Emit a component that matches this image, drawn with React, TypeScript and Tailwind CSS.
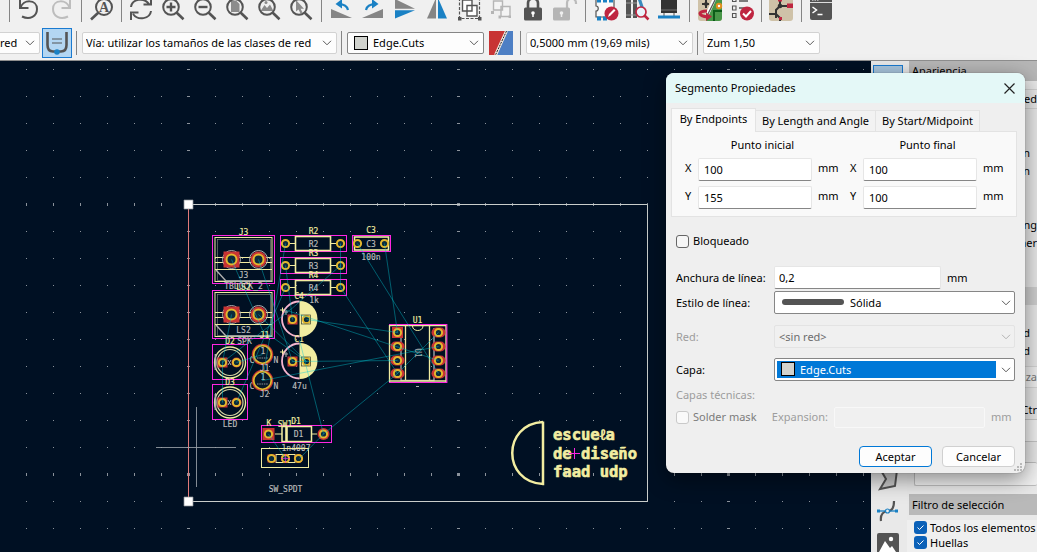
import React from "react";

const DARK = "#545454";
const BLUE = "#1a81c4";
const RED = "#bf2641";
const SILK = "#f2eda1";
const FAB = "#afafaf";
const COURT = "#ff26e2";
const PAD = "#c83434";
const GOLD = "#e3b72e";

function Chevron({ className = "" }: { className?: string }) {
  return (
    <svg viewBox="0 0 10 6" className={"pointer-events-none absolute top-1/2 h-[6px] w-[10px] -translate-y-1/2 " + className} fill="none" stroke="#5a5a5a">
      <path d="M1 .8 5 4.8 9 .8" />
    </svg>
  );
}

function ToolSelect({ label, value, className, swatch }: { label: string; value: string; className: string; swatch?: boolean }) {
  return (
    <div className={"relative h-[22px] shrink-0 rounded-[2px] border bg-[#fdfdfd] " + (swatch ? "border-[#868686] " : "border-[#d2d2d2] ") + className}>
      {swatch && <span className="pointer-events-none absolute top-[3px] left-[6px] size-[14px] border border-black bg-[#d0d2cd]" />}
      <select aria-label={label} className={"block h-full w-full appearance-none bg-transparent text-black outline-none " + (swatch ? "pl-[25px]" : "pl-[3px]")}>
        <option>{value}</option>
      </select>
      <Chevron className="right-[4px]" />
    </div>
  );
}

function Sep({ className = "" }: { className?: string }) {
  return (
    <span className={"flex w-2 shrink-0 justify-center self-stretch " + className}>
      <span className="w-px bg-[#858585]" />
    </span>
  );
}

function Tool({ label, children }: { label: string; children: React.ReactNode }) {
  return (
    <button aria-label={label} className="h-6 w-8 shrink-0">
      <svg viewBox="0 0 32 24" className="h-6 w-8" fill="none" stroke={DARK} strokeWidth="2">
        {children}
      </svg>
    </button>
  );
}

function Lens({ children }: { children: React.ReactNode }) {
  return (
    <>
      {children}
      <circle cx="14" cy="7" r="7.8" />
      <path d="M19.5 12.5 26.5 19.3" strokeWidth="2.6" />
    </>
  );
}

function TopTools() {
  return (
    <div className="flex h-6 shrink-0 overflow-hidden pl-[5px]">
      <Sep className="pb-[2px]" />
      <Tool label="Deshacer">
        <path d="M7 0V8H15.500M7.500 8C10-1 24-1 24 9C24 16 17 20.500 9 16.500" />
      </Tool>
      <Tool label="Rehacer">
        <path d="M25 0V8H16.500M24.500 8C22-1 8-1 8 9C8 16 15 20.500 23 16.500" stroke="#bdbdbd" />
      </Tool>
      <Sep className="pb-[2px]" />
      <Tool label="Buscar">
        <circle cx="19" cy="7" r="8" />
        <path d="M13.500 12.500 6 19.500" strokeWidth="2.600" />
        <text x="19" y="11.500" textAnchor="middle" fontFamily="Liberation Serif, serif" fontWeight="700" fontSize="14" fill={DARK} stroke="none">A</text>
      </Tool>
      <Sep className="pb-[2px]" />
      <Tool label="Refrescar">
        <path d="M6 7C7-1 19-3 24 4M26-3V4.500H18.500M26 11C25 19 13 21 8 14M6 20V12.500H13.500" />
      </Tool>
      <Tool label="Acercar"><Lens><path d="M9.500 7H18.500M14 2.500V11.500" strokeWidth="2.400" /></Lens></Tool>
      <Tool label="Alejar"><Lens><path d="M9.500 7H18.500" strokeWidth="2.400" /></Lens></Tool>
      <Tool label="Ajustar a la página"><Lens><path d="M10 1H15.500L18.500 4V12H10Z" fill="#8c8c8c" stroke="none" /></Lens></Tool>
      <Tool label="Ajustar a objetos"><Lens><path d="M7.500 11 11.500 5 14 8 17 4.500 20.500 11Z" fill="#8c8c8c" stroke="none" /><circle cx="13" cy="2.500" r="1.500" fill="#8c8c8c" stroke="none" /></Lens></Tool>
      <Tool label="Ajustar a la selección"><Lens><path d="M11 0V11.500L13.500 9.500 15.500 13.500 17.500 12.500 15.600 8.700H19Z" fill="#8c8c8c" stroke="none" /></Lens></Tool>
      <Sep className="pb-[2px]" />
      <Tool label="Girar a la izquierda">
        <path d="M6 9V18H27Z" fill="#858585" stroke="none" />
        <path d="M23 10C22 6 18 4 13 4.200" stroke={BLUE} strokeWidth="2.200" />
        <path d="M10.500 4 17-1V8.500Z" fill={BLUE} stroke="none" />
      </Tool>
      <Tool label="Girar a la derecha">
        <path d="M26 9V18H5Z" fill="#858585" stroke="none" />
        <path d="M9 10C10 6 14 4 19 4.200" stroke={BLUE} strokeWidth="2.200" />
        <path d="M21.500 4 15-1V8.500Z" fill={BLUE} stroke="none" />
      </Tool>
      <Tool label="Voltear vertical">
        <path d="M6-1V8.800H26Z" fill="#858585" stroke="none" />
        <path d="M6 10.200V18.500L26 10.200Z" fill={BLUE} stroke="none" />
      </Tool>
      <Tool label="Voltear horizontal">
        <path d="M15-2V18.500H6Z" fill="#858585" stroke="none" />
        <path d="M17-2V18.500H26Z" fill={BLUE} stroke="none" />
      </Tool>
      <Tool label="Agrupar">
        <path d="M6.500-2V18.500H26.500V-2" strokeWidth="1.200" strokeDasharray="3 1.500" />
        <path d="M5 17H8.500V20.500H5ZM25 17H28.500V20.500H25Z" fill={DARK} stroke="none" />
        <path d="M9.500 0H19V11H9.500ZM14 5.500H24V16H14Z" fill="#fff" strokeWidth="1.400" />
      </Tool>
      <Tool label="Desagrupar">
        <g stroke="#b5b5b5" strokeWidth="1.400">
          <path d="M8.500 1H17.500V10H8.500ZM16 6.500H25V16.500H16Z" fill="#f4f4f4" />
          <path d="M6 11H9V14H6ZM13.500 15.500H16V18.500H13.500ZM23.500 15.500H26V18H23.500Z" fill="#b5b5b5" stroke="none" />
        </g>
      </Tool>
      <Tool label="Bloquear">
        <path d="M11 9V3C11-3 21-3 21 3V9" strokeWidth="2.600" />
        <rect x="7" y="7.500" width="18" height="13" rx="1.500" fill={DARK} stroke="none" />
        <circle cx="16" cy="13" r="1.800" fill="#fff" stroke="none" /><path d="M16 13V17" stroke="#fff" strokeWidth="1.500" />
      </Tool>
      <Tool label="Desbloquear">
        <path d="M18 9V3C18-3 27-3 27 3V4" stroke="#bbb" strokeWidth="2.200" />
        <rect x="4" y="7.500" width="17" height="13" rx="1.500" fill="#b5b5b5" stroke="none" />
        <circle cx="12.500" cy="13" r="1.800" fill="#eee" stroke="none" /><path d="M12.500 13V17" stroke="#eee" strokeWidth="1.500" />
      </Tool>
      <Sep className="pb-[2px]" />
      <Tool label="Editor de huellas">
        <path d="M7 0V6C10 6 10 11 7 11V17H25V0" strokeWidth="1.200" fill="#fafafa" />
        <path d="M8-1H12V2.500H8ZM14-1H18V2.500H14ZM20-1H24V2.500H20ZM8 16.500H12V20.500H8ZM14 16.500H18V20.500H14Z" fill={BLUE} stroke="none" />
        <circle cx="22.500" cy="13.500" r="7" fill={RED} stroke="none" />
        <path d="M19 17 20 14 25 9 26.500 10.500 21.500 15.500Z" fill="#fff" stroke="none" />
      </Tool>
      <Tool label="Explorador de huellas">
        <path d="M5 0H10V18H5ZM12 0H16V18H12Z" fill={DARK} stroke="none" />
        <path d="M5 3H16M5 15H16" stroke="#999" strokeWidth="1" />
        <path d="M17 0 20-1 25 14 23 18Z" fill="#398bbd" stroke="none" />
        <circle cx="20" cy="12" r="5" stroke={RED} fill="#e9f3fb" strokeWidth="1.700" />
        <path d="M23.500 15.500 27.500 19.500" stroke={RED} strokeWidth="2.500" />
      </Tool>
      <Tool label="Visor 3D">
        <path d="M8-1H24V13H8Z" fill="#333" stroke="none" />
        <path d="M8 10H24" stroke="#777" strokeWidth="1" />
        <path d="M11 13V16M21 13V16" strokeWidth="1.500" stroke="#888" />
        <path d="M5 15.500H27V18.500H5Z" fill={BLUE} stroke="none" />
      </Tool>
      <Sep className="pb-[2px]" />
      <Tool label="Actualizar placa">
        <path d="M5-3H29V18Q29 21 26 21H8Q5 21 5 18Z" fill="#cfc2a8" stroke="none" />
        <path d="M22-3H29V18Q29 21 26 21H13Z" fill="#489648" stroke="none" />
        <path d="M9 4H16M13 0V8" stroke="#333" /><circle cx="13" cy="4" r="2" fill="#333" stroke="none" />
        <path d="M22-2 14 15" stroke="#fff" strokeWidth="3.500" /><path d="M23-2 15 14" stroke="#555" strokeWidth="1.200" />
        <circle cx="26" cy="6" r="2.200" stroke="#e0901d" fill="#fff" /><path d="M21 21V11H29" stroke="#0c5b18" />
        <path d="M14 11C4 11 5 16 15 17" stroke={RED} strokeWidth="3" /><path d="M13 12.500 19 16.500 13 21Z" fill={RED} stroke="none" />
      </Tool>
      <Tool label="Comprobar reglas">
        <path d="M7.500-2.500H11V1.500H7.500ZM7.500 6H11V10H7.500ZM7.500 13.500H11V17.500H7.500Z" strokeWidth="1.100" />
        <path d="M14 1H23M14 8H19" strokeWidth="1.300" />
        <circle cx="22" cy="13.500" r="7" fill={RED} stroke="none" />
        <path d="M18 13.500 21 16.500 26 11" stroke="#fff" />
      </Tool>
      <Sep className="pb-[2px]" />
      <Tool label="Editor de esquemas">
        <path d="M4-3H28V18Q28 21 25 21H7Q4 21 4 18Z" fill="#cfc2a8" stroke="none" />
        <path d="M15 0V6H22M15 6 11 10V18M4 14H11L15 18V21" stroke="#333" />
        <path d="M22 3.500H28V8H22ZM13-1H17V1.500H13ZM14 17H17V20H14Z" fill={RED} stroke="none" />
        <circle cx="15" cy="6" r="2.300" fill="#333" stroke="none" />
      </Tool>
      <Sep className="pb-[2px]" />
      <Tool label="Consola">
        <rect x="5" y="-4" width="22" height="24" rx="2" fill={DARK} stroke="none" />
        <path d="M5 2.500H27" stroke="#ddd" strokeWidth="1" />
        <path d="M7-.500H14" stroke="#fff" strokeDasharray="1.500 1" />
        <path d="M7.500 7 11.500 10 7.500 13M12.500 14.500H17.500" stroke="#fff" strokeWidth="1.500" />
      </Tool>
    </div>
  );
}

function OptionBar() {
  return (
    <div className="flex h-9 shrink-0 items-center overflow-hidden pt-[2px]">
      <ToolSelect label="Pista" value="red" className="-ml-1 w-[44px]" />
      <button aria-label="Ancho automático" className="ml-[2px] flex h-[30px] w-[30px] shrink-0 items-center justify-center border border-[#1a7ad0] bg-[#b3d6f2]">
        <svg viewBox="0 0 26 26" className="size-[26px]" fill="none" stroke={DARK} strokeWidth="2.600">
          <path d="M3.500 2V15C3.500 19 5 21.500 9 21.500H17C21 21.500 22.500 19 22.500 15V2" />
          <path d="M8 9H18M8 13H18" strokeWidth="1.200" />
          <circle cx="13" cy="22" r="2.800" fill={BLUE} stroke="none" />
        </svg>
      </button>
      <Sep className="py-[5px]" />
      <ToolSelect label="Vía" value="Vía: utilizar los tamaños de las clases de red" className="ml-[2px] w-[255px]" />
      <Sep className="py-[5px]" />
      <ToolSelect label="Capa activa" value="Edge.Cuts" swatch className="ml-[2px] w-[137px]" />
      <button aria-label="Par de capas" className="ml-[5px] size-6 shrink-0">
        <svg viewBox="0 0 24 24" className="size-6">
          <path d="M0 0H17L6 24H0Z" fill="#c83434" />
          <path d="M18 0H24V24H8Z" fill="#4d7fc4" />
          <path d="M17.500 0 6.500 24" stroke="#f3e9e0" strokeWidth="3" />
          <path d="M17.500 0 6.500 24" stroke="#222" strokeDasharray="2 1" />
        </svg>
      </button>
      <Sep className="ml-[3px] py-[5px]" />
      <ToolSelect label="Cuadrícula" value="0,5000 mm (19,69 mils)" className="ml-[2px] w-[167px]" />
      <Sep className="py-[5px]" />
      <ToolSelect label="Zum" value="Zum 1,50" className="ml-[2px] w-[117px]" />
    </div>
  );
}

function T({ x, y, c = "#bcbcbc", children }: { x: number; y: number; c?: string; children: string }) {
  return (
    <text x={x} y={y} fill={c} stroke={c} strokeWidth=".15" textAnchor="middle">
      {children}
    </text>
  );
}

function Pad({ x, y, r = 6, kind = "round" }: { x: number; y: number; r?: number; kind?: "round" | "square" | "bare" | "oval" }) {
  const g = r > 7 ? 5 : 3.6;
  return (
    <g>
      {kind === "square" && <rect x={x - r} y={y - r} width={r * 2} height={r * 2} fill={PAD} />}
      {kind === "round" && <circle cx={x} cy={y} r={r} fill={PAD} />}
      {kind === "oval" && <rect x={x - 7} y={y - 5} width="14" height="10" rx="5" fill={PAD} />}
      <circle cx={x} cy={y} r={g} fill="#0b2b3c" stroke={GOLD} strokeWidth="2" />
    </g>
  );
}

function Terminal({ dy, name }: { dy: number; name: string }) {
  return (
    <g transform={`translate(0 ${dy})`}>
      <rect x="212.500" y="235.500" width="62" height="48" stroke={COURT} />
      <rect x="215" y="237.500" width="57" height="44" stroke={SILK} />
      <rect x="217.500" y="239.500" width="53" height="41" stroke="#8d8f80" strokeWidth=".6" />
      <path d="M215 257.500H272M215 262.500H272M215 269.500H272" stroke={SILK} />
      <path d="M216 270 226 281H272" stroke={FAB} strokeWidth="1.300" />
      <circle cx="231.500" cy="259.500" r="9" stroke={FAB} />
      <circle cx="258.500" cy="259.500" r="9" stroke={FAB} />
      <Pad x={231.5} y={259.5} r={8} kind="square" />
      <Pad x={258.5} y={259.5} r={8} />
      <T x={243.5} y={277.5}>{name}</T>
    </g>
  );
}

function Resistor({ dy, name }: { dy: number; name: string }) {
  return (
    <g transform={`translate(0 ${dy})`}>
      <rect x="280.500" y="235.500" width="66" height="16" stroke={COURT} />
      <path d="M289 243.500H295M331 243.500H337" stroke={SILK} />
      <rect x="295.500" y="236.500" width="35" height="14" stroke={SILK} strokeWidth="1.600" />
      <Pad x={285.5} y={243.5} kind="bare" />
      <Pad x={340.5} y={243.5} kind="bare" />
      <T x={313.5} y={247}>{name}</T>
      <T x={313.5} y={234} c={SILK}>{name}</T>
    </g>
  );
}

function Capacitor({ dy }: { dy: number }) {
  return (
    <g transform={`translate(0 ${dy})`}>
      <path d="M299.500 301.500A17.500 17.500 0 0 0 299.500 336.500" stroke="#f6b5cf" strokeWidth="1.800" />
      <path d="M299.500 301A18 18 0 0 1 299.500 337Z" fill={SILK} />
      <path d="M280 310H285M282.500 307.500V312.500" stroke={SILK} />
      <path d="M284 312H288M286 310V315" stroke={FAB} />
      <Pad x={292.5} y={319.5} r={5} kind="square" />
      <Pad x={306.5} y={319.5} kind="bare" />
      <rect x="301.500" y="315" width="9" height="9" stroke="#39402f" strokeWidth=".7" />
    </g>
  );
}

function Led({ dy }: { dy: number }) {
  return (
    <g transform={`translate(0 ${dy})`}>
      <rect x="212.500" y="344.500" width="35" height="35" stroke={COURT} />
      <circle cx="230" cy="362.500" r="15.500" stroke={SILK} strokeWidth="1.300" />
      <circle cx="230" cy="362.500" r="13" stroke="#d5d2a0" strokeWidth="1.200" />
      <path d="M215.500 354V370" stroke={FAB} strokeWidth="1.800" />
      <Pad x={222.5} y={362.5} r={5} kind="square" />
      <Pad x={236.5} y={362.5} r={5} />
      <path d="M228 360 231 365M231 360 228 365" stroke={FAB} />
    </g>
  );
}

const ratsnest =
  "M357.5 243.5 438.5 373.5M384.5 243.5 397.5 332.5M340.5 287.5 397.5 373.5M340.5 243.5V287.5M438.5 332.5 397.5 373.5 323.5 434M306.5 319.5 397.5 332.5M285.5 310 438.5 360.5M292.5 361.500 397.5 360.5M262.5 380.5 438.5 346.5M299.5 340 323.5 434M231.5 259.5 262.5 330 306.500 361.500M258.500 259.500 292.500 361.500M285.500 243.500 262.500 380.500M285.500 265.500 292.500 319.500M285.500 287.500 236.500 402.500M340.500 265.500 292.500 308 222.500 362.500M231.500 314.500 222.500 362.500V402.500M258.500 314.500 306.500 361.500M236.500 362.500 262.500 354.500M268.500 434 285.500 458.500M299.500 458.500 323.500 434";

const cols = Array.from({ length: 33 }, (_, i) => i - 6);
const rows = Array.from({ length: 19 }, (_, i) => i - 5);

function Board() {
  return (
    <svg viewBox="0 61 871 491" className="h-[491px] w-[871px] shrink-0" fill="none" fontFamily="DejaVu Sans Mono, monospace" fontSize="8" role="img" aria-label="Placa">
      <g fill="#8b929b">
        {rows.map((r) =>
          cols.map((c) => (
            <rect
              key={r + "_" + c}
              x={188 + c * 27 - (c % 10 === 0 ? 1 : 0)}
              y={204 + r * 27 - (r % 10 === 0 ? 1 : 0)}
              width={c % 10 === 0 ? 3 : 1}
              height={r % 10 === 0 ? 3 : 1}
            />
          ))
        )}
      </g>
      <path d="M188.500 204.500H647.500V501.500H188.500" stroke="#c9cdcb" />
      <path d="M188.500 204V501" stroke="#e07a7a" />

      <Terminal dy={0} name="J3" />
      <Terminal dy={55} name="LS2" />
      <T x={243.5} y={235} c={SILK}>J3</T>
      <T x={243.5} y={289}>TBLOCK_2</T>
      <T x={243.5} y={290} c={SILK}>LS2</T>
      <Resistor dy={0} name="R2" />
      <Resistor dy={22} name="R3" />
      <Resistor dy={44} name="R4" />
      <T x={314} y={303}>1k</T>

      <rect x="352.500" y="235.500" width="38" height="16" stroke={COURT} />
      <rect x="354.500" y="237" width="34" height="13" stroke={SILK} strokeWidth="1.600" />
      <Pad x={357.5} y={243.5} kind="bare" />
      <Pad x={384.5} y={243.5} kind="bare" />
      <T x={371} y={233} c={SILK}>C3</T>
      <T x={371} y={247}>C3</T>
      <T x={371} y={260}>100n</T>

      <Capacitor dy={0} />
      <Capacitor dy={42} />
      <T x={299} y={299} c={SILK}>C4</T>
      <T x={299} y={342} c={SILK}>C1</T>
      <T x={299.5} y={388.5}>47u</T>

      <Led dy={0} />
      <Led dy={40} />
      <T x={230} y={344} c={SILK}>D2</T>
      <T x={244.5} y={344}>SPK</T>
      <T x={230} y={385} c={SILK}>D3</T>
      <T x={230} y={427}>LED</T>

      <T x={252} y={363}>C</T>
      <T x={276} y={363}>N</T>
      <T x={252} y={389}>C</T>
      <T x={276} y={389}>N</T>
      {[354.5, 380.5].map((y) => (
        <g key={y}>
          <circle cx="262.500" cy={y} r="10" stroke={PAD} strokeWidth="1.500" fill="#061829" />
          <circle cx="262.500" cy={y} r="8.800" stroke={GOLD} strokeWidth="1.800" />
          <T x={263} y={y - 1}>1</T>
          <path d={`M257 ${y + 3.5}H268`} stroke="#8b9199" strokeWidth="1" strokeDasharray="1.500 .8" />
        </g>
      ))}
      <T x={264.5} y={338} c={SILK}>J1</T>
      <T x={264.5} y={371}>J1</T>
      <T x={264.5} y={397}>J2</T>

      <rect x="261.500" y="425.500" width="70" height="17" stroke={COURT} />
      <path d="M275 434H282M311 434H317" stroke={SILK} />
      <rect x="282" y="426.500" width="29.500" height="15" stroke={SILK} strokeWidth="1.500" />
      <path d="M286.500 426V442" stroke={SILK} strokeWidth="2.600" />
      <Pad x={268.5} y={434} kind="square" />
      <Pad x={323.5} y={434} />
      <T x={269} y={426} c={SILK}>K</T>
      <T x={296} y={424} c={SILK}>D1</T>
      <T x={298.5} y={437}>D1</T>
      <T x={285} y={427} c={SILK}>SW1</T>
      <T x={296} y={451}>1n4007</T>
      <rect x="261.500" y="448.500" width="47" height="19" stroke={SILK} />
      <rect x="276" y="454.500" width="19" height="8" stroke={SILK} />
      <Pad x={271.5} y={458.5} r={4} kind="square" />
      <Pad x={285.5} y={458.5} r={4.5} />
      <Pad x={298.5} y={458.5} r={4.5} />
      <path d="M281 458.500H290M285.500 454V463" stroke={COURT} strokeOpacity=".6" />
      <T x={285.500} y={492}>SW_SPDT</T>

      <path d="M401 328V380.500H434V328" stroke={FAB} strokeWidth="1.300" />
      <path d="M389.500 325V382M446 325V382M405.500 326V380M429.500 326V380M389 325.500H446M389 381H446" stroke={SILK} strokeWidth="1.300" />
      <path d="M412.500 326C412.500 332 423 332 423 326" stroke={SILK} />
      <path d="M389 324.500H447M389 382.500H447M446.900 324V383" stroke={COURT} />
      {[332.5, 346.5, 360.5, 373.5].map((y, i) => (
        <g key={y}>
          <Pad x={397.5} y={y} kind={i === 0 ? "square" : "oval"} r={5.5} />
          <Pad x={438.5} y={y} kind="oval" />
        </g>
      ))}
      <T x={417.500} y={323} c={SILK}>U1</T>
      <text x="0" y="0" transform="translate(414.5 353) rotate(90)" fill={FAB} textAnchor="middle">U1</text>
      <path d="M416 386.500H419" stroke={FAB} />

      <path d={ratsnest} stroke="#00c8d4" strokeOpacity=".42" />
      <path d="M156 447.500H236M196.500 407V487" stroke="#9aa1a8" strokeOpacity=".85" />
      <path d="M184 200H193V209H184ZM184 497H193V506H184Z" fill="#fff" stroke="#8e9298" strokeWidth=".7" />

      <path d="M543 421.500V484C502 482 502 424 543 422" stroke={SILK} strokeWidth="2.500" />
      <g fill={SILK} stroke={SILK} strokeWidth=".6" fontFamily="DejaVu Sans Mono, monospace" fontWeight="700" fontSize="15.500">
        <text x="553" y="440">escueℓa</text>
        <text x="553" y="458.500">de diseño</text>
        <text x="553" y="477">faad udp</text>
      </g>
      <path d="M569 453.500H580M574.500 448V459" stroke={COURT} />
    </svg>
  );
}

function SideTools() {
  return (
    <div className="flex w-9 shrink-0 flex-col items-center justify-between bg-[#e9e9e9] pr-[2px]">
      <button aria-label="Seleccionar" className="mt-1 h-[30px] w-[30px] border border-[#1a7ad0] bg-[#a9c6de]" />
      <div className="flex flex-col items-center">
        <button aria-label="Zona" className="h-8 w-8">
          <svg viewBox="0 0 32 32" className="size-8" fill="#c9c9c9" stroke={DARK} strokeWidth="2"><path d="M7 2 25 5 23 21 8 24 14 14Z" /></svg>
        </button>
        <button aria-label="Curva" className="h-8 w-8">
          <svg viewBox="0 0 32 32" className="size-8" fill="none" stroke={DARK} strokeWidth="2.200"><path d="M9 24C8 17 12 14 16 14C20 14 22 11 22 4" /><path d="M6 14H26" stroke={BLUE} strokeWidth="1.300" /><path d="M5 12.500H8V15.500H5ZM23 12.500H26V15.500H23Z" fill={BLUE} stroke="none" /><circle cx="15.500" cy="14" r="2" fill="#eee" stroke={BLUE} strokeWidth="1.200" /></svg>
        </button>
        <button aria-label="Imagen" className="h-[23px] w-8 overflow-hidden">
          <svg viewBox="0 0 32 23" className="h-[23px] w-8"><path d="M7 4H25Q27 4 27 6V23H5V6Q5 4 7 4Z" fill={DARK} /><circle cx="19" cy="10" r="2.200" fill="#fff" /><path d="M7 23 13 12 18 19 20 17 24 23Z" fill="#fff" /></svg>
        </button>
      </div>
    </div>
  );
}

function Frag({ children, className = "" }: { children?: string; className?: string }) {
  return <div className={"flex shrink-0 items-center justify-end overflow-hidden whitespace-nowrap " + className}>{children}</div>;
}

function FilterBox({ label }: { label: string }) {
  return (
    <label className="flex h-[15px] items-center gap-[3px] whitespace-nowrap">
      <span className="relative size-[13px] shrink-0">
        <input type="checkbox" defaultChecked className="block size-[13px] appearance-none rounded-[3px] bg-[#0b61b8]" />
        <svg viewBox="0 0 13 13" className="pointer-events-none absolute inset-0 size-[13px]" fill="none" stroke="#fff"><path d="M3.500 6.500 5.500 8.500 9.500 4.500" /></svg>
      </span>
      {label}
    </label>
  );
}

function SidePanel() {
  return (
    <aside className="flex min-w-0 flex-1 flex-col overflow-hidden bg-[#e8e8e8]">
      <div className="ml-[2px] flex h-[20px] shrink-0 items-center bg-[#b7b7b7] pl-[3px]">Apariencia</div>
      <Frag className="mt-[8px] h-[20px] border-y border-[#d0d0d0]">ed</Frag>
      <Frag className="mt-[35px] h-[18px] pr-[7px]">n</Frag>
      <Frag className="h-[18px] pr-[7px]">n</Frag>
      <Frag className="mt-[36px] h-[18px]">ng</Frag>
      <Frag className="h-[18px]">ner</Frag>
      <Frag className="mt-[35px] h-[18px] bg-[#cfcfcf]" />
      <Frag className="mt-[19px] h-[18px] pr-[7px]">d</Frag>
      <Frag className="h-[18px] pr-[7px]">d</Frag>
      <Frag className="mt-[6px] h-[22px] border-y border-[#d5d5d5] bg-[#efefef] text-[#777]">liza</Frag>
      <Frag className="mt-[12px] h-[20px] border-b border-[#c5c5c5]">Ctr</Frag>
      <Frag className="h-[22px] border-b border-[#c5c5c5] bg-[#f0f0f0]" />
      <Frag className="mt-[20px] ml-[7px] h-[24px] rounded-[2px] border border-r-0 border-[#bdbdbd] bg-[#f1f1f1]" />
      <div className="mt-[8px] ml-[2px] flex h-[21px] shrink-0 items-center bg-[#b9b9b9] pl-[3px]">Filtro de selección</div>
      <div className="mt-[5px] flex flex-1 flex-col bg-[#efefef] pl-[7px]">
        <FilterBox label="Todos los elementos" />
        <FilterBox label="Huellas" />
      </div>
    </aside>
  );
}

function NumberField({ id, label, value }: { id: string; label: string; value: string }) {
  return (
    <div className="flex items-center">
      <label htmlFor={id} className="w-[13px] pb-1">{label}</label>
      <input id={id} defaultValue={value} className="h-[23px] w-[114px] rounded-[2px] border border-[#e6e6e6] border-b-[#868686] bg-white pl-[5px] outline-none" />
      <span className="ml-[6px] pb-1">mm</span>
    </div>
  );
}

function DialogSelect({ id, value, kind }: { id: string; value: string; kind: "line" | "off" | "layer" }) {
  const frame = kind === "off" ? "border-[#e3e3e3] bg-[#f0f0f0]" : "border-[#868686] bg-white";
  return (
    <div className={"relative h-[23px] flex-1 rounded-[2px] border p-[2px] " + frame}>
      <div className={"relative mr-[16px] h-full " + (kind === "layer" ? "bg-[#0078d7]" : "")}>
        {kind === "line" && <span className="pointer-events-none absolute top-[5px] left-[5px] h-[6px] w-[62px] rounded-full bg-[#545454]" />}
        {kind === "layer" && <span className="pointer-events-none absolute top-[1px] left-[4px] size-[14px] border border-black bg-[#d0d2cd]" />}
        <select
          id={id}
          disabled={kind === "off"}
          className={
            "block h-full w-full appearance-none bg-transparent opacity-100 outline-none " +
            (kind === "line" ? "pl-[73px] text-black" : kind === "off" ? "pl-[2px] text-[#6d6d6d]" : "pl-[23px] text-white")
          }
        >
          <option>{value}</option>
        </select>
      </div>
      <Chevron className={"right-[3px] " + (kind === "off" ? "opacity-40" : "")} />
    </div>
  );
}

function PropertiesDialog() {
  const tab = "border border-b-0 border-[#e3e3e3] whitespace-nowrap ";
  return (
    <section role="dialog" aria-labelledby="dlg-title" className="absolute top-[73px] right-[12px] w-[359px] overflow-hidden rounded-lg bg-[#efefef] shadow-[0_6px_22px_rgba(0,0,0,0.45),0_0_1px_rgba(0,0,0,0.6)]">
      <header className="flex h-[30px] items-center justify-between bg-[#e4f8f7] pr-[10px] pl-[9px]">
        <h1 id="dlg-title">Segmento Propiedades</h1>
        <button aria-label="Cerrar">
          <svg viewBox="0 0 11 11" className="size-[11px]" fill="none" stroke="#222" strokeWidth="1.200"><path d="M.5.500 10.500 10.500M10.500.500.500 10.500" /></svg>
        </button>
      </header>
      <div className="pt-[5px] pr-[8px] pl-[5px]">
        <div role="tablist" className="flex items-end">
          <button role="tab" aria-selected="true" className={tab + "relative z-10 -mb-px h-[24px] w-[85px] bg-[#f9f9f9] pb-[3px]"}>By Endpoints</button>
          <button role="tab" aria-selected="false" className={tab + "h-[21px] w-[120px] border-l-0 bg-[#f2f2f2]"}>By Length and Angle</button>
          <button role="tab" aria-selected="false" className={tab + "h-[21px] w-[104px] border-l-0 bg-[#f2f2f2]"}>By Start/Midpoint</button>
        </div>
        <div role="tabpanel" className="border border-[#e3e3e3] bg-[#f9f9f9] pb-[7px] pl-[13px]">
          <div className="flex h-[26px] items-center">
            <h2 className="w-[155px] text-center">Punto inicial</h2>
            <h2 className="ml-[10px] w-[155px] text-center">Punto final</h2>
          </div>
          <div className="grid grid-cols-[165px_1fr] gap-y-[5px]">
            <NumberField id="x1" label="X" value="100" />
            <NumberField id="x2" label="X" value="100" />
            <NumberField id="y1" label="Y" value="155" />
            <NumberField id="y2" label="Y" value="100" />
          </div>
        </div>
      </div>
      <div className="px-[10px] pt-[16px] pb-[6px]">
        <label className="flex h-[16px] items-center gap-[4px]">
          <input type="checkbox" className="size-[13px] appearance-none rounded-[3px] border border-[#666] bg-[#f6f6f6]" />
          Bloqueado
        </label>
        <div className="mt-[17px] flex h-[23px] items-center">
          <label htmlFor="w" className="w-[98px]">Anchura de línea:</label>
          <input id="w" defaultValue="0,2" className="h-[23px] w-[167px] rounded-[2px] border border-[#e6e6e6] border-b-[#868686] bg-white pl-[4px] outline-none" />
          <span className="ml-[6px]">mm</span>
        </div>
        <div className="mt-[2px] flex items-center">
          <label htmlFor="s" className="w-[98px]">Estilo de línea:</label>
          <DialogSelect id="s" kind="line" value="Sólida" />
        </div>
        <div className="mt-[11px] flex items-center">
          <label htmlFor="n" className="w-[98px] text-[#9d9d9d]">Red:</label>
          <DialogSelect id="n" kind="off" value="<sin red>" />
        </div>
        <div className="mt-[10px] flex items-center">
          <label htmlFor="l" className="w-[98px]">Capa:</label>
          <DialogSelect id="l" kind="layer" value="Edge.Cuts" />
        </div>
        <p className="mt-[6px] h-[16px] leading-[16px] text-[#9d9d9d]">Capas técnicas:</p>
        <div className="mt-[3px] flex h-[22px] items-center text-[#9d9d9d]">
          <label className="flex items-center gap-[4px] text-[#7c7c7c]">
            <input type="checkbox" disabled className="size-[13px] appearance-none rounded-[3px] border border-[#c9c9c9] bg-[#f9f9f9]" />
            Solder mask
          </label>
          <span className="flex-1" />
          <label htmlFor="e" className="pr-[6px]">Expansion:</label>
          <input id="e" disabled className="h-[21px] w-[151px] rounded-[2px] border border-[#f8f8f8] bg-[#f0f0f0]" />
          <span className="w-[30px] pl-[6px]">mm</span>
        </div>
        <div className="mt-[18px] flex justify-end gap-[10px]">
          <button className="h-[21px] w-[73px] rounded-[4px] border border-[#0078d7] bg-[#fdfdfd]">Aceptar</button>
          <button className="h-[21px] w-[73px] rounded-[4px] border border-[#d0d0d0] bg-[#fdfdfd]">Cancelar</button>
        </div>
      </div>
      <svg viewBox="0 0 8 8" className="absolute right-[3px] bottom-[2px] size-[8px]" fill="#b9b9b9">
        <path d="M6 0H8V2H6ZM3 3H5V5H3ZM6 3H8V5H6ZM0 6H2V8H0ZM3 6H5V8H3ZM6 6H8V8H6Z" />
      </svg>
    </section>
  );
}

export default function App() {
  return (
    <div className="relative flex h-screen w-full flex-col overflow-hidden bg-[#f0f0f0] font-['Noto_Sans','Open_Sans',sans-serif] text-[11px] leading-[16px] text-black">
      <TopTools />
      <OptionBar />
      <div className="flex min-h-0 flex-1 border-t border-[#8f8f8f]">
        <main className="w-[84%] max-w-[871px] shrink-0 overflow-hidden bg-[#001023]">
          <Board />
        </main>
        <SideTools />
        <SidePanel />
      </div>
      <PropertiesDialog />
    </div>
  );
}
